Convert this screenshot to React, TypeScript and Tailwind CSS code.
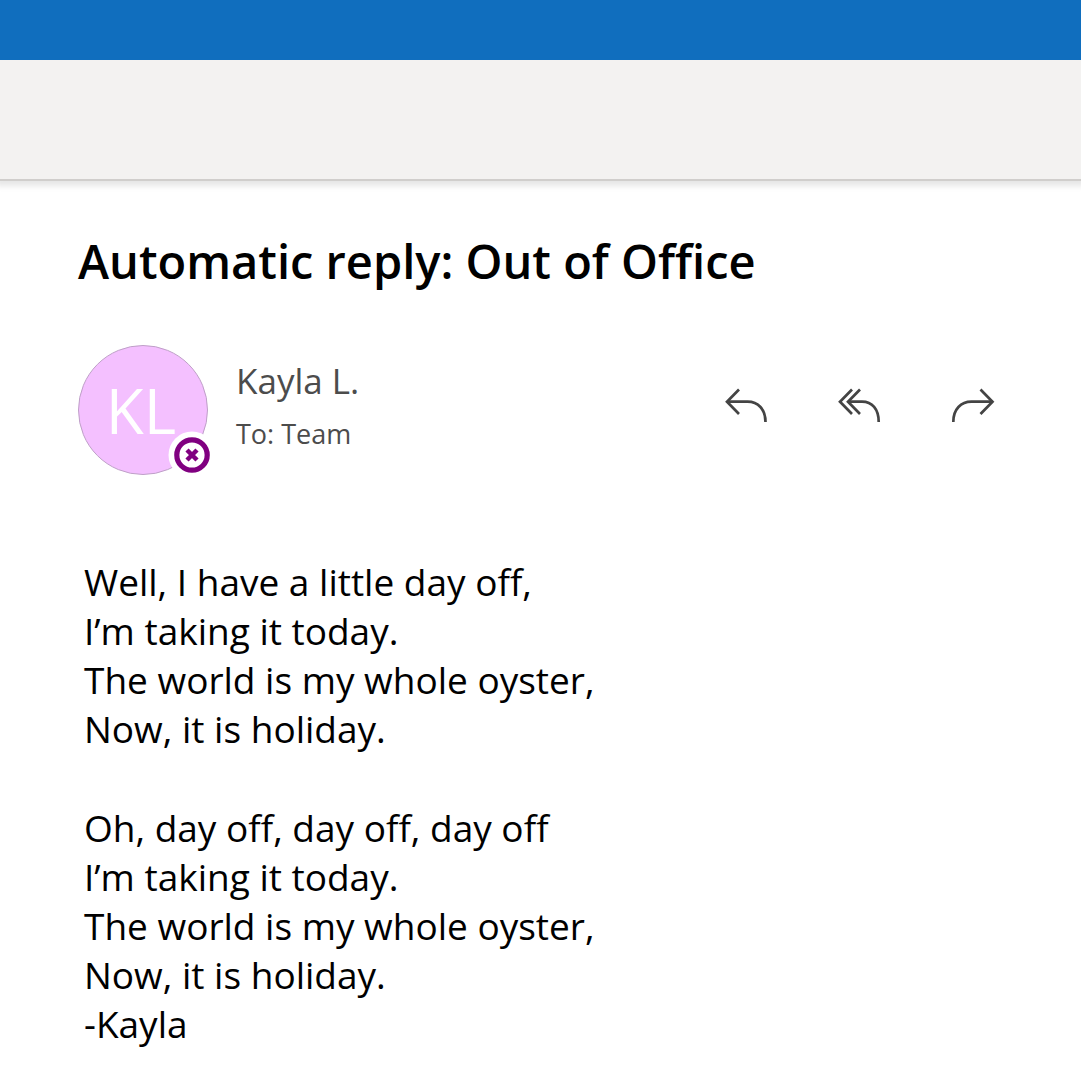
const replyIcon = (
  <svg viewBox="0 0 44 36" className="h-9 w-11" fill="none" stroke="#444444" strokeWidth="2.7" aria-hidden="true">
    <path d="M16 2.500 4 14.700 16 27" />
    <path d="M4 14.700h20.500C35 14.700 42.500 22 42.500 35" />
  </svg>
);

const replyAllIcon = (
  <svg viewBox="0 0 44 36" className="h-9 w-11" fill="none" stroke="#444444" strokeWidth="2.7" aria-hidden="true">
    <path d="M15 2.500 3 14.700 15 27M23 2.500 11 14.700 23 27" />
    <path d="M11 14.700h14C35 14.700 41.700 22 41.700 35" />
  </svg>
);

const forwardIcon = (
  <svg viewBox="0 0 44 36" className="h-9 w-11" fill="none" stroke="#444444" strokeWidth="2.7" aria-hidden="true">
    <path d="M29.500 2.500 41.500 14.700 29.500 27" />
    <path d="M41.500 14.700H20.500C10 14.700 2.300 22 2.300 35" />
  </svg>
);

const actions = [
  { label: "Reply", icon: replyIcon },
  { label: "Reply all", icon: replyAllIcon },
  { label: "Forward", icon: forwardIcon },
];

const verses = [
  [
    "Well, I have a little day off,",
    "I’m taking it today.",
    "The world is my whole oyster,",
    "Now, it is holiday.",
  ],
  [
    "Oh, day off, day off, day off",
    "I’m taking it today.",
    "The world is my whole oyster,",
    "Now, it is holiday.",
    "-Kayla",
  ],
];

function Avatar() {
  return (
    <div className="relative size-[130px] shrink-0">
      <div className="flex size-full items-center justify-center rounded-full border border-[#bfa0c8] bg-[#f4c0ff]">
        <span className="pr-1 font-['Open_Sans',sans-serif] text-[62px] leading-none font-normal text-white">KL</span>
      </div>
      <svg viewBox="0 0 48 48" className="absolute -right-2 -bottom-1 size-12" role="img" aria-label="Out of office">
        <circle cx="24" cy="24" r="23.500" fill="white" />
        <circle cx="24" cy="24" r="15.200" fill="white" stroke="#800080" strokeWidth="5.200" />
        <path d="m19 19 10 10m0-10-10 10" stroke="#800080" strokeWidth="4.500" />
      </svg>
    </div>
  );
}

export default function App() {
  return (
    <div className="min-h-screen bg-white font-['Open_Sans','Noto_Sans',sans-serif] text-black">
      <header>
        <div className="relative z-10 h-15 bg-[#106ebe]" />
        <div className="h-[121px] border-b-2 border-[#d0cecc] bg-[#f3f2f1] shadow-[0_1px_6px_4px_rgba(0,0,0,0.1)]" />
      </header>
      <main className="px-[78px] pt-12">
        <h1 className="text-[47px] leading-16 font-semibold">Automatic reply: Out of Office</h1>
        <section className="mt-[52px] flex items-start">
          <Avatar />
          <div className="ml-7 flex-1 pt-3 text-[#4c4c4c]">
            <p className="text-[35px] leading-12">Kayla L.</p>
            <p className="mt-2 text-[27px] leading-[42px]">To: Team</p>
          </div>
          <div className="mt-[42px] mr-2 flex gap-[70px]">
            {actions.map((action) => (
              <button key={action.label} type="button" aria-label={action.label}>
                {action.icon}
              </button>
            ))}
          </div>
        </section>
        <article className="mt-[82px] ml-[6px] flex flex-col gap-[50px] text-[37px] leading-[49px]">
          {verses.map((lines, verse) => (
            <p key={verse}>
              {lines.map((line) => (
                <span key={line} className="block">{line}</span>
              ))}
            </p>
          ))}
        </article>
      </main>
    </div>
  );
}
